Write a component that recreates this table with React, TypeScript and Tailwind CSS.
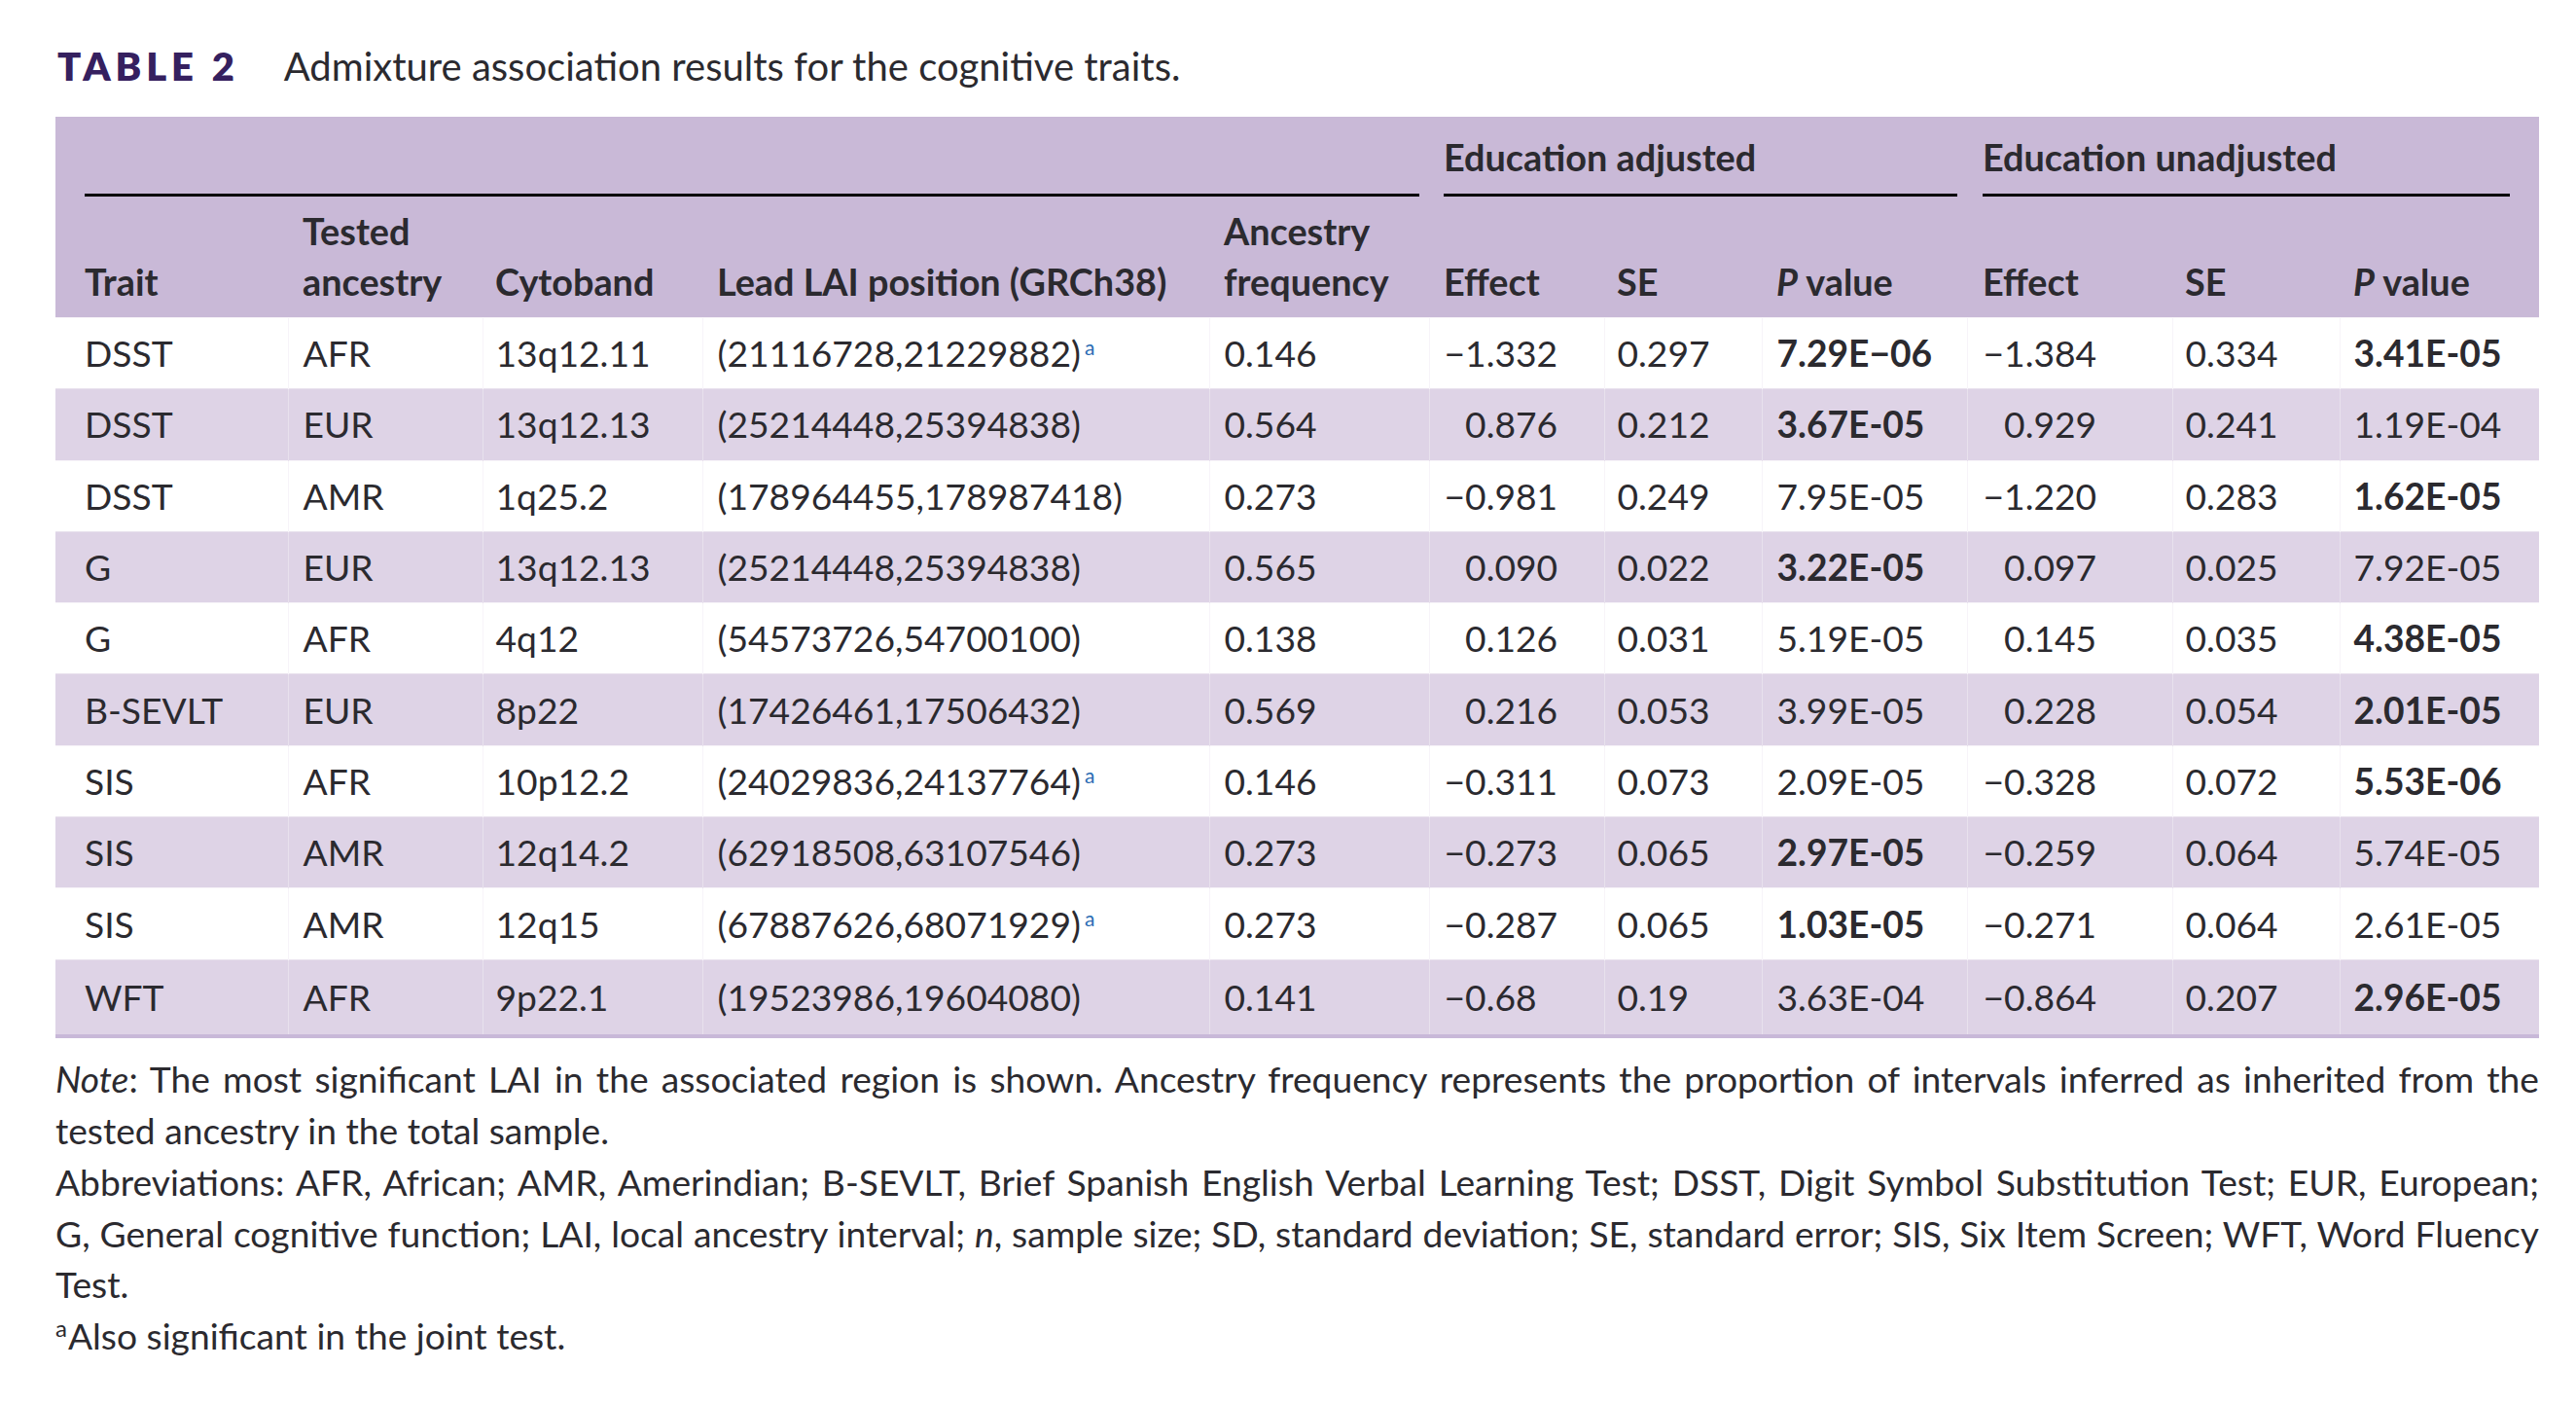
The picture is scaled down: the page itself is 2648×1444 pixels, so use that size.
import React from "react";

// ---------------------------------------------------------------------------
// Data
// ---------------------------------------------------------------------------

type Row = {
  trait: string;
  ancestry: string;
  cytoband: string;
  position: string;
  joint?: boolean;
  freq: string;
  adjEffect: string;
  adjSe: string;
  adjP: string;
  adjBold?: boolean;
  unEffect: string;
  unSe: string;
  unP: string;
  unBold?: boolean;
};

const ROWS: Row[] = [
  { trait: "DSST", ancestry: "AFR", cytoband: "13q12.11", position: "(21116728,21229882)", joint: true, freq: "0.146", adjEffect: "−1.332", adjSe: "0.297", adjP: "7.29E−06", adjBold: true, unEffect: "−1.384", unSe: "0.334", unP: "3.41E-05", unBold: true },
  { trait: "DSST", ancestry: "EUR", cytoband: "13q12.13", position: "(25214448,25394838)", freq: "0.564", adjEffect: "0.876", adjSe: "0.212", adjP: "3.67E-05", adjBold: true, unEffect: "0.929", unSe: "0.241", unP: "1.19E-04" },
  { trait: "DSST", ancestry: "AMR", cytoband: "1q25.2", position: "(178964455,178987418)", freq: "0.273", adjEffect: "−0.981", adjSe: "0.249", adjP: "7.95E-05", unEffect: "−1.220", unSe: "0.283", unP: "1.62E-05", unBold: true },
  { trait: "G", ancestry: "EUR", cytoband: "13q12.13", position: "(25214448,25394838)", freq: "0.565", adjEffect: "0.090", adjSe: "0.022", adjP: "3.22E-05", adjBold: true, unEffect: "0.097", unSe: "0.025", unP: "7.92E-05" },
  { trait: "G", ancestry: "AFR", cytoband: "4q12", position: "(54573726,54700100)", freq: "0.138", adjEffect: "0.126", adjSe: "0.031", adjP: "5.19E-05", unEffect: "0.145", unSe: "0.035", unP: "4.38E-05", unBold: true },
  { trait: "B-SEVLT", ancestry: "EUR", cytoband: "8p22", position: "(17426461,17506432)", freq: "0.569", adjEffect: "0.216", adjSe: "0.053", adjP: "3.99E-05", unEffect: "0.228", unSe: "0.054", unP: "2.01E-05", unBold: true },
  { trait: "SIS", ancestry: "AFR", cytoband: "10p12.2", position: "(24029836,24137764)", joint: true, freq: "0.146", adjEffect: "−0.311", adjSe: "0.073", adjP: "2.09E-05", unEffect: "−0.328", unSe: "0.072", unP: "5.53E-06", unBold: true },
  { trait: "SIS", ancestry: "AMR", cytoband: "12q14.2", position: "(62918508,63107546)", freq: "0.273", adjEffect: "−0.273", adjSe: "0.065", adjP: "2.97E-05", adjBold: true, unEffect: "−0.259", unSe: "0.064", unP: "5.74E-05" },
  { trait: "SIS", ancestry: "AMR", cytoband: "12q15", position: "(67887626,68071929)", joint: true, freq: "0.273", adjEffect: "−0.287", adjSe: "0.065", adjP: "1.03E-05", adjBold: true, unEffect: "−0.271", unSe: "0.064", unP: "2.61E-05" },
  { trait: "WFT", ancestry: "AFR", cytoband: "9p22.1", position: "(19523986,19604080)", freq: "0.141", adjEffect: "−0.68", adjSe: "0.19", adjP: "3.63E-04", unEffect: "−0.864", unSe: "0.207", unP: "2.96E-05", unBold: true },
];

// ---------------------------------------------------------------------------
// Small pieces
// ---------------------------------------------------------------------------

// positive effects get an invisible minus so the digits line up
function Effect({ value }: { value: string }) {
  if (value.startsWith("−")) return <>{value}</>;
  return (
    <>
      <span className="invisible">−</span>
      {value}
    </>
  );
}

function Pv() {
  return (
    <>
      <span className="italic">P</span> value
    </>
  );
}

function Rule({ children }: { children?: React.ReactNode }) {
  return (
    <div className="h-[66px] border-b-[3px] border-black pb-[11px] leading-[52px]">
      {children}
    </div>
  );
}

// ---------------------------------------------------------------------------
// Page
// ---------------------------------------------------------------------------

export default function App() {
  return (
    <div className="min-h-screen bg-white font-['Lato','Liberation_Sans',sans-serif] text-[#2b2a2f]">
      <div className="pl-[57px] pr-[38px] pt-[44px]">
        <h1 className="mb-[28px] flex items-baseline text-[40px] leading-[48px]">
          <span className="pl-[2px] font-extrabold tracking-[0.12em] text-[#35205f]">TABLE 2</span>
          <span className="ml-[46px] font-normal">Admixture association results for the cognitive traits.</span>
        </h1>

        <table className="w-full table-fixed border-collapse text-left text-[37.2px]">
          <colgroup>
            <col className="w-[239px]" />
            <col className="w-[200px]" />
            <col className="w-[226px]" />
            <col className="w-[521px]" />
            <col className="w-[226px]" />
            <col className="w-[180px]" />
            <col className="w-[162px]" />
            <col className="w-[211px]" />
            <col className="w-[211px]" />
            <col className="w-[172px]" />
            <col className="w-[205px]" />
          </colgroup>
          <thead className="bg-[#c9b9d7] text-[37.8px] font-bold">
            <tr>
              <th colSpan={5} className="pl-[30px] pr-[10px] pt-[16px] font-bold">
                <Rule />
              </th>
              <th colSpan={3} className="pl-[15px] pr-[10px] pt-[16px] font-bold">
                <Rule>Education adjusted</Rule>
              </th>
              <th colSpan={3} className="pl-[16px] pr-[30px] pt-[16px] font-bold">
                <Rule>Education unadjusted</Rule>
              </th>
            </tr>
            <tr className="align-bottom leading-[52px]">
              <th className="pb-[10px] pl-[30px] pt-[10px] font-bold">Trait</th>
              <th className="pb-[10px] pl-[15px] pt-[10px] font-bold">
                Tested
                <br />
                ancestry
              </th>
              <th className="pb-[10px] pl-[13px] pt-[10px] font-bold">Cytoband</th>
              <th className="whitespace-nowrap pb-[10px] pl-[15px] pt-[10px] font-bold">Lead LAI position (GRCh38)</th>
              <th className="pb-[10px] pl-[15px] pt-[10px] font-bold">
                Ancestry
                <br />
                frequency
              </th>
              <th className="pb-[10px] pl-[15px] pt-[10px] font-bold">Effect</th>
              <th className="pb-[10px] pl-[13px] pt-[10px] font-bold">SE</th>
              <th className="pb-[10px] pl-[15px] pt-[10px] font-bold">
                <Pv />
              </th>
              <th className="pb-[10px] pl-[16px] pt-[10px] font-bold">Effect</th>
              <th className="pb-[10px] pl-[13px] pt-[10px] font-bold">SE</th>
              <th className="pb-[10px] pl-[14px] pt-[10px] font-bold">
                <Pv />
              </th>
            </tr>
          </thead>
          <tbody className="leading-[52px]">
            {ROWS.map((r, i) => {
              const shaded = i % 2 === 1;
              const last = i === ROWS.length - 1;
              const cell = `border-t border-l first:border-l-0 ${
                shaded ? "border-[#e8e1ed]" : "border-[#f7f4f9]"
              } ${last ? "h-[79px] border-b-4 border-b-[#c8b8d8]" : "h-[73.3px]"}`;
              return (
                <tr key={i} className={shaded ? "bg-[#ded3e6]" : "bg-white"}>
                  <td className={`${cell} pl-[30px]`}>{r.trait}</td>
                  <td className={`${cell} pl-[15px]`}>{r.ancestry}</td>
                  <td className={`${cell} pl-[13px]`}>{r.cytoband}</td>
                  <td className={`${cell} whitespace-nowrap pl-[15px]`}>
                    {r.position}
                    {r.joint && (
                      <sup className="-top-[12px] ml-[4px] text-[21px] text-[#2c6cb4]">a</sup>
                    )}
                  </td>
                  <td className={`${cell} pl-[15px]`}>{r.freq}</td>
                  <td className={`${cell} pl-[15px]`}>
                    <Effect value={r.adjEffect} />
                  </td>
                  <td className={`${cell} pl-[13px]`}>{r.adjSe}</td>
                  <td className={`${cell} pl-[15px] ${r.adjBold ? "font-bold" : ""}`}>{r.adjP}</td>
                  <td className={`${cell} pl-[16px]`}>
                    <Effect value={r.unEffect} />
                  </td>
                  <td className={`${cell} pl-[13px]`}>{r.unSe}</td>
                  <td className={`${cell} pl-[14px] ${r.unBold ? "font-bold" : ""}`}>{r.unP}</td>
                </tr>
              );
            })}
          </tbody>
        </table>

        <div className="mt-[16px] text-[37.2px] leading-[52.8px]">
          <p>
            <span className="block whitespace-nowrap [text-align-last:justify]">
              <span className="italic">Note</span>: The most significant LAI in the associated region is shown.
              Ancestry frequency represents the proportion of intervals inferred as inherited from the
            </span>
            <span className="block">tested ancestry in the total sample.</span>
          </p>
          <p>
            <span className="block whitespace-nowrap [text-align-last:justify]">
              Abbreviations: AFR, African; AMR, Amerindian; B-SEVLT, Brief Spanish English Verbal Learning Test;
              DSST, Digit Symbol Substitution Test; EUR, European;
            </span>
            <span className="block whitespace-nowrap [text-align-last:justify]">
              G, General cognitive function; LAI, local ancestry interval; <span className="italic">n</span>, sample
              size; SD, standard deviation; SE, standard error; SIS, Six Item Screen; WFT, Word Fluency
            </span>
            <span className="block">Test.</span>
          </p>
          <p>
            <sup className="-top-[13px] mr-[1px] text-[24px]">a</sup>Also significant in the joint test.
          </p>
        </div>
      </div>
    </div>
  );
}
